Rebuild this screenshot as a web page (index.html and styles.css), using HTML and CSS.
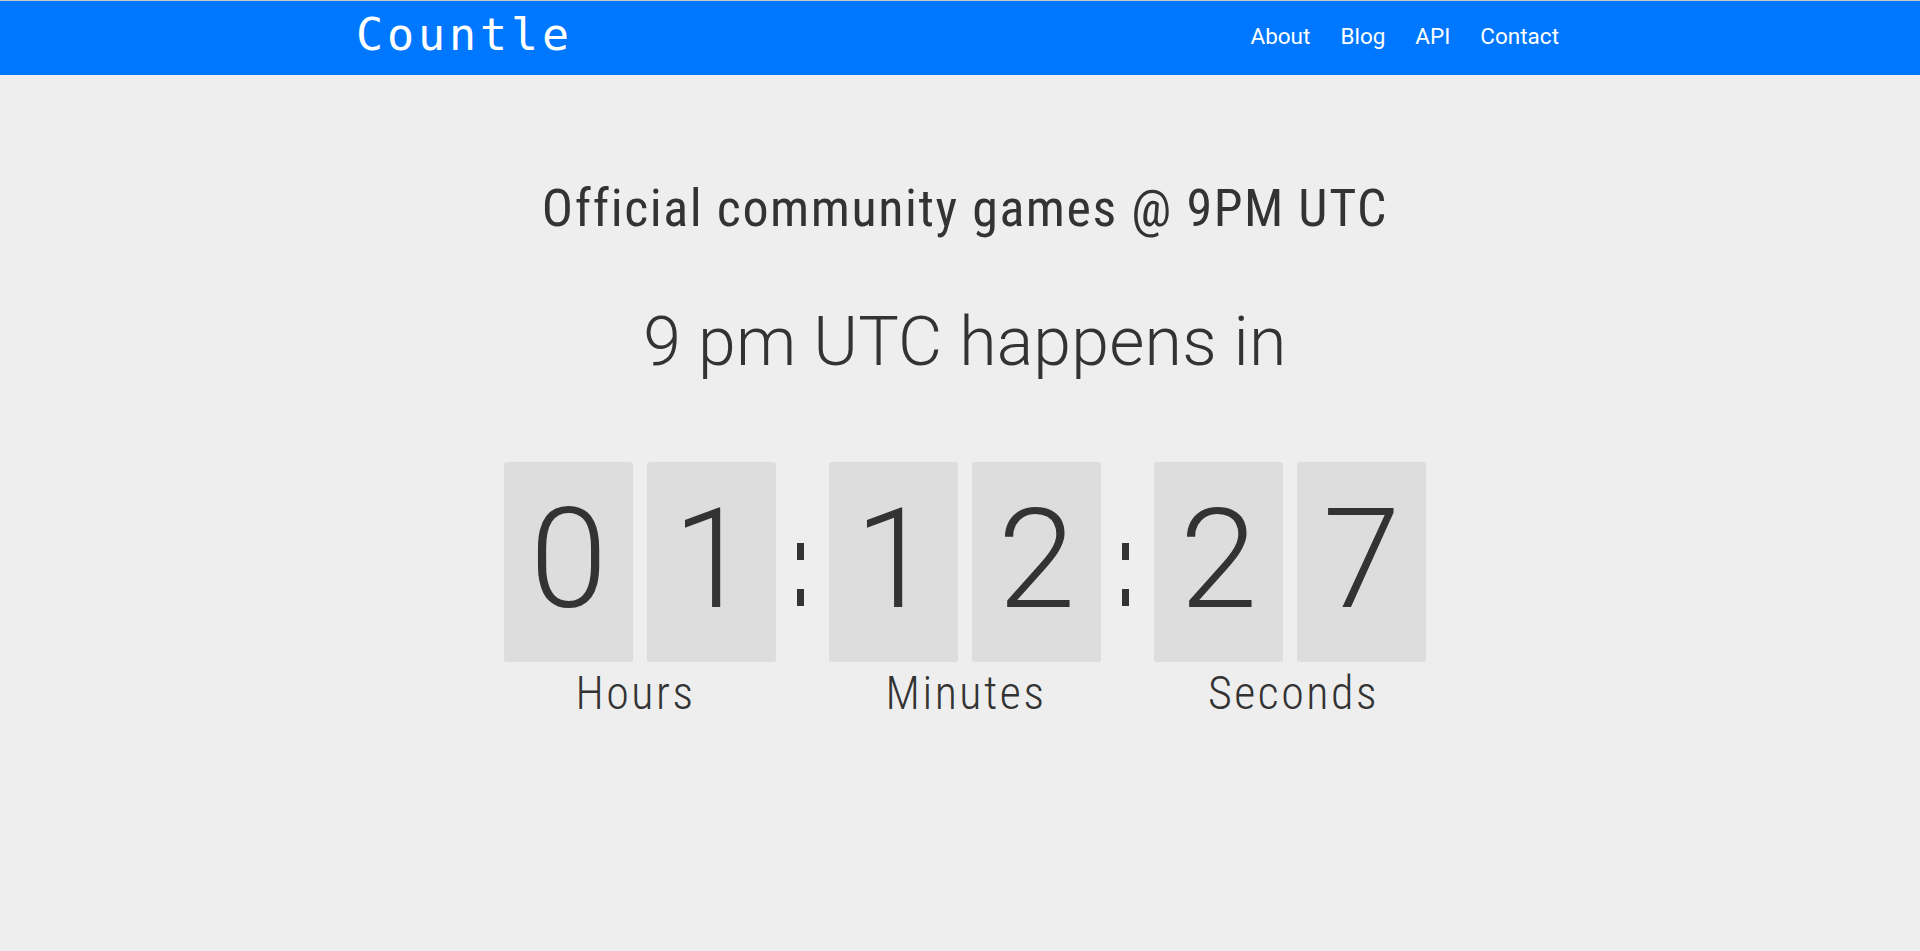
FILE: index.html
```html
<!DOCTYPE html>
<html lang="en">
<head>
<meta charset="utf-8">
<title>Countle</title>
<link rel="stylesheet" href="styles.css">
</head>
<body>
<header class="navbar">
  <div class="bar">
    <a class="logo" href="#">Countle</a>
    <nav class="links">
      <a href="#">About</a>
      <a href="#">Blog</a>
      <a href="#">API</a>
      <a href="#">Contact</a>
    </nav>
  </div>
</header>
<main class="main">
  <h1 class="title">Official community games @ 9PM UTC</h1>
  <h2 class="subtitle">9 pm UTC happens in</h2>
  <div class="countdown">
    <div class="group">
      <div class="digits"><span class="digit">0</span><span class="digit">1</span></div>
      <div class="label label-hours">Hours</div>
    </div>
    <div class="sep" aria-label=":"><span class="dot"></span><span class="dot"></span></div>
    <div class="group">
      <div class="digits"><span class="digit">1</span><span class="digit">2</span></div>
      <div class="label">Minutes</div>
    </div>
    <div class="sep" aria-label=":"><span class="dot"></span><span class="dot"></span></div>
    <div class="group">
      <div class="digits"><span class="digit">2</span><span class="digit">7</span></div>
      <div class="label label-seconds">Seconds</div>
    </div>
  </div>
</main>
</body>
</html>
```
FILE: styles.css
```css
html, body {
  margin: 0;
  padding: 0;
  background: #eeeeee;
  color: #333333;
  font-family: "Roboto", "Noto Sans", sans-serif;
}

.navbar {
  background: #0077ff;
  border-top: 1px solid #c9c9c9;
  height: 74px;
}

.bar {
  width: 1203px;
  margin-left: calc(50% - 604px);
  display: flex;
  justify-content: space-between;
  align-items: flex-start;
}

.logo {
  font-family: "DejaVu Sans Mono", monospace;
  font-size: 45px;
  line-height: 44px;
  letter-spacing: 3.9px;
  margin-top: 12px;
  color: #ffffff;
  text-decoration: none;
}

.links {
  display: flex;
  gap: 30px;
  margin-top: 23px;
}

.links a {
  color: #ffffff;
  text-decoration: none;
  font-size: 22.5px;
  line-height: 24px;
  font-weight: 400;
}

.main {
  padding-left: 10px;
  display: flex;
  flex-direction: column;
  align-items: center;
}

.title {
  margin: 103px 0 0;
  font-size: 52px;
  line-height: 1.2;
  font-weight: 400;
  font-stretch: condensed;
  letter-spacing: 1.57px;
}

.subtitle {
  margin: 62px 0 0;
  font-size: 68px;
  line-height: 1.2;
  font-weight: 300;
  letter-spacing: 0.2px;
}

.countdown {
  margin-top: 78px;
  display: flex;
  align-items: flex-start;
}

.group {
  display: flex;
  flex-direction: column;
  align-items: center;
}

.digits {
  display: flex;
  gap: 14px;
}

.digit {
  width: 129px;
  height: 195px;
  padding-bottom: 5px;
  background: #dddddd;
  border-radius: 3px;
  text-align: center;
  font-size: 140px;
  line-height: 195px;
  font-weight: 300;
}

.label {
  margin-top: 4px;
  padding-left: 2px;
  font-size: 46px;
  line-height: 1.2;
  font-weight: 300;
  font-stretch: condensed;
  letter-spacing: 2.5px;
}

.label-hours {
  margin-right: 11px;
}

.label-seconds {
  margin-left: 5px;
}

.sep {
  display: flex;
  flex-direction: column;
  gap: 29px;
  padding-top: 81px;
  margin: 0 25px 0 21px;
}

.dot {
  width: 7px;
  height: 17px;
  background: #333333;
}
```
